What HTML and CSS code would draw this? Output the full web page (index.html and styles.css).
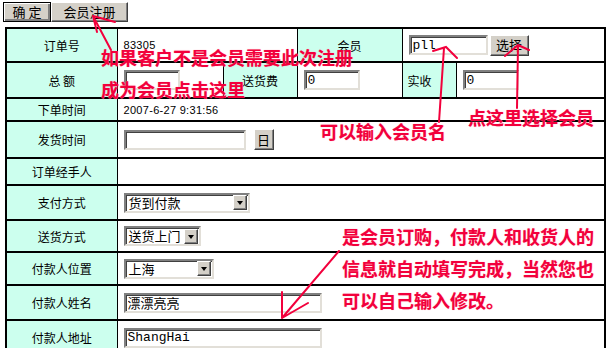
FILE: index.html
```html
<!DOCTYPE html>
<html lang="zh-CN">
<head>
  <meta charset="UTF-8">
  <title>订单录入</title>
  <link rel="stylesheet" href="styles.css">
</head>
<body>

<div class="page">
  <div class="toolbar">
    <button class="btn btn-default btn-ok">确&nbsp;定</button>
    <button class="btn btn-register">会员注册</button>
  </div>

  <table class="order">
    <colgroup>
      <col class="c-label">
      <col class="c-a">
      <col class="c-b">
      <col class="c-c">
      <col class="c-d">
      <col class="c-e">
    </colgroup>
    <tr>
      <td class="label">订单号</td>
      <td class="value" colspan="2">83305</td>
      <td class="label">会员</td>
      <td class="value" colspan="2"><input class="field field-member" type="text" value="pll"><button class="btn btn-small btn-pick">选择</button></td>
    </tr>
    <tr>
      <td class="label">总&nbsp;额</td>
      <td class="value"><input class="field field-money" type="text" value=""></td>
      <td class="label">送货费</td>
      <td class="value"><input class="field field-money" type="text" value="0"></td>
      <td class="label label-left">实收</td>
      <td class="value"><input class="field field-money" type="text" value="0"></td>
    </tr>
    <tr>
      <td class="label">下单时间</td>
      <td class="value" colspan="5">2007-6-27 9:31:56</td>
    </tr>
    <tr>
      <td class="label">发货时间</td>
      <td class="value" colspan="5"><input class="field field-date" type="text"><button class="btn btn-small btn-day">日</button></td>
    </tr>
    <tr>
      <td class="label">订单经手人</td>
      <td class="value" colspan="5"></td>
    </tr>
    <tr>
      <td class="label">支付方式</td>
      <td class="value" colspan="5">
        <div class="select select-pay"><span class="select-text">货到付款</span><span class="select-arrow"></span></div>
      </td>
    </tr>
    <tr>
      <td class="label">送货方式</td>
      <td class="value" colspan="5">
        <div class="select select-ship"><span class="select-text">送货上门</span><span class="select-arrow"></span></div>
      </td>
    </tr>
    <tr>
      <td class="label">付款人位置</td>
      <td class="value" colspan="5">
        <div class="select select-area"><span class="select-text">上海</span><span class="select-arrow"></span></div>
      </td>
    </tr>
    <tr>
      <td class="label">付款人姓名</td>
      <td class="value" colspan="5"><input class="field field-long" type="text" value="漂漂亮亮"></td>
    </tr>
    <tr>
      <td class="label">付款人地址</td>
      <td class="value" colspan="5"><input class="field field-long" type="text" value="ShangHai"></td>
    </tr>
  </table>

  <!-- annotations drawn over the form -->
  <div class="note note-register">如果客户不是会员需要此次注册<br>成为会员点击这里</div>
  <div class="note note-input">可以输入会员名</div>
  <div class="note note-pick">点这里选择会员</div>
  <div class="note note-auto">是会员订购，付款人和收货人的<br>信息就自动填写完成，当然您也<br>可以自己输入修改。</div>

  <svg class="arrows" width="608" height="348" viewBox="0 0 608 348">
    <g fill="none" stroke="#f2003c" stroke-width="2" stroke-linecap="round">
      <path d="M111 50 L93 16 M93 16 L115 22 M93 16 L97 32"/>
      <path d="M439 122 L444 48 M433 51 L446 47 L457 58"/>
      <path d="M517 108 L518 46 M505 56 L518 45 L529 50"/>
      <path d="M339 251 L282 318 M282 318 L282 292 M282 318 L308 303"/>
    </g>
  </svg>
</div>

</body>
</html>
```

FILE: styles.css
```css
* {
  box-sizing: border-box;
}

body {
  margin: 0;
  background-color: white;
}

.page {
  position: relative;
  width: 608px;
  height: 348px;
  overflow: hidden;
  padding: 2px 0 0 3px;
  font-family: "Noto Sans CJK SC", sans-serif;
  font-size: 12px;
  color: black;
}

.toolbar {
  display: flex;
  height: 20px;
  margin-bottom: 5px;
}

.btn {
  height: 20px;
  padding: 0;
  margin: 0;
  font-family: "Noto Sans CJK SC", sans-serif;
  font-size: 13px;
  line-height: 16px;
  color: black;
  background-color: #d4d0c8;
  border: 1px solid;
  border-color: #ffffff #404040 #404040 #ffffff;
  box-shadow: inset -1px -1px #808080;
  vertical-align: middle;
}

.btn-default {
  border-color: #000000;
  box-shadow: inset 1px 1px #ffffff, inset -2px -2px #808080;
}

.btn-ok {
  width: 48px;
}

.btn-register {
  width: 77px;
}

.btn-small {
  height: 21px;
}

.btn-pick {
  width: 39px;
  margin-left: 2px;
}

.btn-day {
  width: 20px;
  margin-left: 8px;
}

.order {
  margin-left: 2px;
  width: 599px;
  table-layout: fixed;
  border-collapse: collapse;
  border: 2px solid black;
}

.c-label { width: 111px; }
.c-a { width: 106px; }
.c-b { width: 74px; }
.c-c { width: 105px; }
.c-d { width: 54px; }
.c-e { width: 149px; }

.order td {
  border-style: solid;
  border-color: black;
  border-width: 2px 1px;
  padding: 0 0 0 6px;
  vertical-align: middle;
  white-space: nowrap;
  overflow: hidden;
}

.order tr:nth-child(1) { height: 34px; }
.order tr:nth-child(2) { height: 36px; }
.order tr:nth-child(3) { height: 23px; }
.order tr:nth-child(4) { height: 37px; }
.order tr:nth-child(5) { height: 27px; }
.order tr:nth-child(6) { height: 35px; }
.order tr:nth-child(7) { height: 32px; }
.order tr:nth-child(8) { height: 33px; }
.order tr:nth-child(9) { height: 35px; }
.order tr:nth-child(10) { height: 35px; }

.label {
  background-color: #ccffee;
  text-align: center;
  padding: 0 !important;
}

.order .label-left {
  text-align: left;
  padding-left: 5px !important;
}

.value {
  background-color: white;
  font-family: "Liberation Sans", Arial, sans-serif;
  font-size: 11px;
  letter-spacing: 0.3px;
}

.field {
  height: 20px;
  margin: 0;
  padding: 0 2px;
  font-family: "Liberation Mono", "Noto Sans CJK SC", monospace;
  font-size: 13px;
  letter-spacing: 0;
  color: black;
  background-color: white;
  border: 2px solid;
  border-color: #808080 #e2dfd8 #e2dfd8 #808080;
  box-shadow: inset 1px 1px #404040;
  outline: none;
  vertical-align: middle;
}

.field-member { width: 79px; }
.field-money { width: 56px; }
.field-date { width: 122px; }
.field-long { width: 198px; }

.select {
  display: flex;
  align-items: center;
  height: 20px;
  padding: 1px;
  border: 2px solid;
  border-color: #808080 #e2dfd8 #e2dfd8 #808080;
  box-shadow: inset 1px 1px #404040;
  background-color: white;
  letter-spacing: 0;
}

.select-pay { width: 126px; }
.select-ship { width: 77px; }
.select-area { width: 90px; }

.select-text {
  flex: 1;
  padding-left: 2px;
  font-family: "Noto Sans CJK SC", sans-serif;
  font-size: 13px;
  line-height: 16px;
}

.select-arrow {
  position: relative;
  width: 14px;
  height: 15px;
  background-color: #d4d0c8;
  border: 1px solid;
  border-color: #ffffff #404040 #404040 #ffffff;
  box-shadow: inset -1px -1px #808080;
}

.select-arrow::after {
  content: "";
  position: absolute;
  left: 3px;
  top: 5px;
  border-style: solid;
  border-width: 4px 3px 0 3px;
  border-color: black transparent transparent transparent;
}

.note {
  position: absolute;
  font-family: "Noto Sans CJK SC", sans-serif;
  font-size: 18px;
  font-weight: bold;
  color: #f2003c;
  white-space: nowrap;
  text-shadow: 0 0 1px #ff99b0;
}

.note-register {
  left: 101px;
  top: 41px;
  line-height: 32px;
}

.note-input {
  left: 320px;
  top: 120px;
  line-height: 22px;
}

.note-pick {
  left: 468px;
  top: 106px;
  line-height: 22px;
}

.note-auto {
  left: 342px;
  top: 220px;
  line-height: 32px;
}

.arrows {
  position: absolute;
  left: 0;
  top: 0;
  pointer-events: none;
}
```
